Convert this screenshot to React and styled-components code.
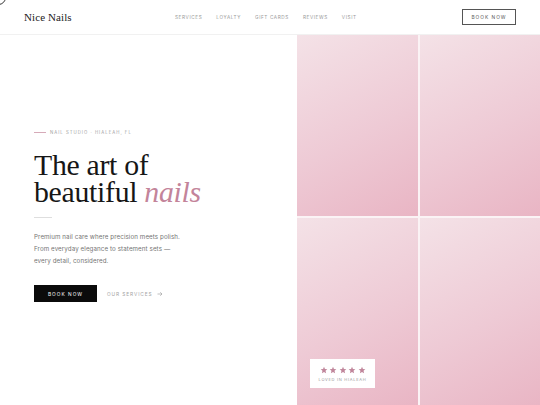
import React from 'react'
import styled, { createGlobalStyle } from 'styled-components'

const GlobalStyle = createGlobalStyle`
  html, body {
    margin: 0;
    padding: 0;
    background: #fff;
  }
  body {
    font-family: "Inter", "Liberation Sans", sans-serif;
    color: #1a1a1a;
    overflow: hidden;
  }
`

const serif = `"Liberation Serif", "DejaVu Serif", serif`
const pink = '#c3849a'

const Page = styled.div`
  width: 540px;
  position: relative;
`

const CursorRing = styled.span`
  position: absolute;
  left: -9px;
  top: -10px;
  width: 13px;
  height: 13px;
  border: 1.5px solid #333;
  border-radius: 50%;
  z-index: 5;
`

const Header = styled.header`
  height: 34px;
  border-bottom: 1px solid #f1f1f1;
  display: flex;
  align-items: center;
  padding: 0 24px;
  box-sizing: content-box;
`

const Logo = styled.div`
  font-family: ${serif};
  font-size: 11px;
  letter-spacing: 0.1px;
  color: #222;
  width: 151px;
`

const Nav = styled.nav`
  display: flex;
  gap: 14px;
  flex: 1;
`

const NavLink = styled.a`
  font-size: 4.7px;
  letter-spacing: 0.6px;
  color: #9a9a9a;
  text-transform: uppercase;
`

const OutlineButton = styled.button`
  width: 54px;
  height: 16px;
  border: 1px solid #555;
  background: #fff;
  font-family: inherit;
  font-size: 4.8px;
  letter-spacing: 1px;
  color: #555;
  padding: 0;
`

const Hero = styled.section`
  display: grid;
  grid-template-columns: 297px 1fr;
  height: 372px;
`

const Copy = styled.div`
  display: flex;
  flex-direction: column;
  justify-content: flex-start;
  padding: 95px 0 0 34px;
`

const Eyebrow = styled.div`
  display: flex;
  align-items: center;
  gap: 4px;
  font-size: 4.3px;
  letter-spacing: 1px;
  color: #a0a0a0;
  text-transform: uppercase;

  &::before {
    content: '';
    width: 12px;
    height: 1px;
    background: #d6aab8;
  }
`

const Title = styled.h1`
  margin: 16px 0 0;
  font-family: ${serif};
  font-weight: 400;
  font-size: 29.8px;
  line-height: 27px;
  color: #161616;
  letter-spacing: -0.3px;

  em {
    color: ${pink};
    font-style: italic;
  }
`

const Rule = styled.div`
  width: 18px;
  height: 1px;
  background: #dedede;
  margin-top: 12px;
`

const Lead = styled.p`
  margin: 13px 0 0;
  font-size: 6.2px;
  line-height: 12px;
  letter-spacing: 0.1px;
  color: #747474;
`

const Actions = styled.div`
  display: flex;
  align-items: center;
  gap: 10px;
  margin-top: 18px;
`

const SolidButton = styled.button`
  width: 63px;
  height: 17px;
  background: #0b0b0b;
  border: none;
  color: #fff;
  font-family: inherit;
  font-size: 4.8px;
  letter-spacing: 1px;
  padding: 0;
`

const TextLink = styled.a`
  font-size: 4.8px;
  letter-spacing: 0.9px;
  color: #a3a3a3;
  display: flex;
  align-items: center;
  gap: 4px;
`

const Gallery = styled.div`
  display: grid;
  grid-template-columns: 121px 1fr;
  grid-template-rows: 181px 1fr;
  gap: 2px;
  background: #fbf3f5;
`

const Tile = styled.div`
  position: relative;
  background: linear-gradient(152deg, #f4e2e7 0%, #eecad5 55%, #e9b5c4 100%);
`

const Badge = styled.div`
  position: absolute;
  left: 13px;
  top: 141px;
  width: 65px;
  height: 29px;
  background: #fff;
  display: flex;
  flex-direction: column;
  align-items: center;
  justify-content: center;
  gap: 3px;
`

const Stars = styled.div`
  display: flex;
  gap: 1.5px;
  color: #c0869b;
`

const Caption = styled.div`
  font-size: 4px;
  letter-spacing: 0.7px;
  color: #999;
`

const Star = () => (
  <svg width="8" height="8" viewBox="0 0 24 24" fill="currentColor">
    <path d="M12 2l2.9 6.9 7.1.6-5.4 4.7 1.6 7.3L12 17.8 5.8 21.5l1.6-7.3L2 9.5l7.1-.6z" />
  </svg>
)

const Arrow = () => (
  <svg width="6" height="6" viewBox="0 0 12 12" fill="none" stroke="#a3a3a3" strokeWidth="1.4">
    <path d="M1 6h9M6.5 2.5L10 6l-3.5 3.5" />
  </svg>
)

const navItems = ['Services', 'Loyalty', 'Gift Cards', 'Reviews', 'Visit']

export default function App() {
  return (
    <Page>
      <GlobalStyle />
      <CursorRing />
      <Header>
        <Logo>Nice Nails</Logo>
        <Nav>
          {navItems.map(item => (
            <NavLink key={item}>{item}</NavLink>
          ))}
        </Nav>
        <OutlineButton>BOOK NOW</OutlineButton>
      </Header>
      <Hero>
        <Copy>
          <Eyebrow>Nail Studio · Hialeah, FL</Eyebrow>
          <Title>
            The art of
            <br />
            beautiful <em>nails</em>
          </Title>
          <Rule />
          <Lead>
            Premium nail care where precision meets polish.
            <br />
            From everyday elegance to statement sets —
            <br />
            every detail, considered.
          </Lead>
          <Actions>
            <SolidButton>BOOK NOW</SolidButton>
            <TextLink>
              OUR SERVICES <Arrow />
            </TextLink>
          </Actions>
        </Copy>
        <Gallery>
          <Tile />
          <Tile />
          <Tile>
            <Badge>
              <Stars>
                {[0, 1, 2, 3, 4].map(i => <Star key={i} />)}
              </Stars>
              <Caption>LOVED IN HIALEAH</Caption>
            </Badge>
          </Tile>
          <Tile />
        </Gallery>
      </Hero>
    </Page>
  )
}
